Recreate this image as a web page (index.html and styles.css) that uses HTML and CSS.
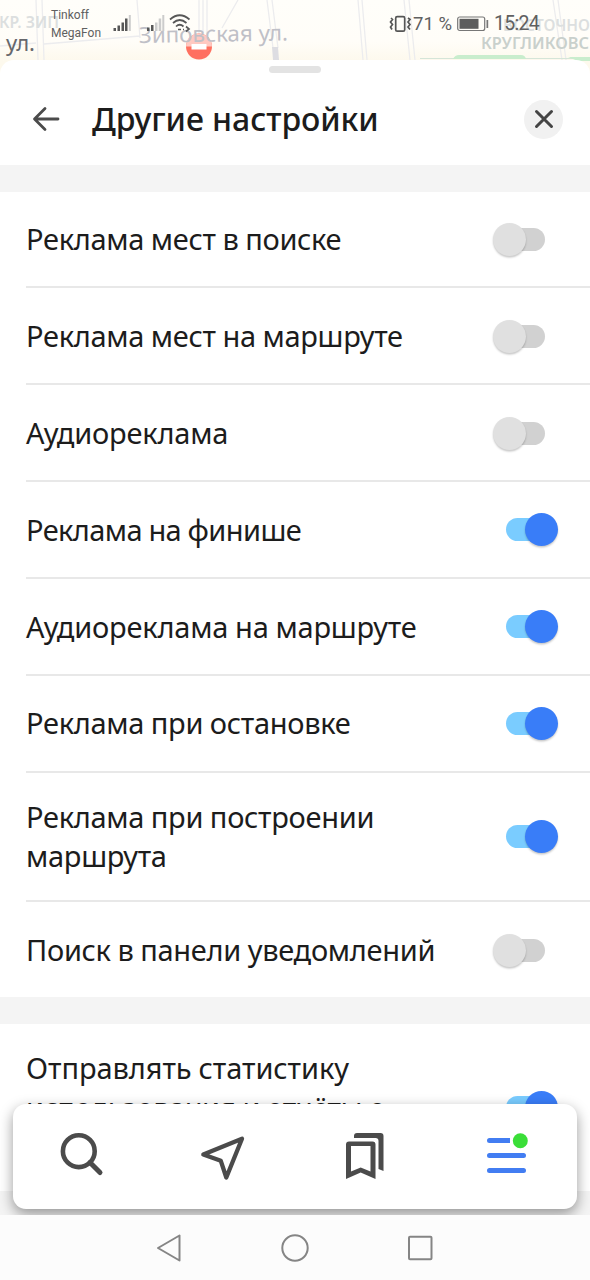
FILE: index.html
```html
<!DOCTYPE html>
<html lang="ru">
<head>
<meta charset="utf-8">
<title>Другие настройки</title>
<link rel="stylesheet" href="styles.css">
</head>
<body>
<div class="screen">
  <header class="top">
    <svg class="map" width="590" height="76" viewBox="0 0 590 76">
      <defs><linearGradient id="veil" x1="0" y1="0" x2="0" y2="1"><stop offset="0" stop-color="#fffefa"/><stop offset=".55" stop-color="#fffdf8"/><stop offset=".8" stop-color="#fdf9ed"/></linearGradient></defs>
      <rect width="590" height="76" fill="url(#veil)"/>
      <g fill="none" stroke="#ececee" stroke-width="1.3">
        <path d="M36 0L38 60M42 0L44 60M137 0L140 38M199 0V35M203 0V35M207 0V35M238 0L222 28M44 44L140 36M267 0L273 48M272 0L278 48M358 0L363 60M362 0L367 60M404 0L410 60M409 0L415 60M553 0L562 60M558 0L566 60M0 46L36 43"/>
      </g>
      <path d="M272 47h6l1 13h-6z" fill="#dddde2"/>
      <path d="M420 58.500H590" stroke="#d5e5d8" fill="none"/>
      <path d="M453 59q2-4 6-4h62q4 0 5 4zM568 57h22v4h-12z" fill="#c9edcd"/>
      <circle cx="199" cy="46.500" r="13" fill="#ff705f"/>
      <path d="M186 46.500a13 13 0 0 1 26 0z" fill="#ffc9c1"/>
      <rect x="191.500" y="44" width="15" height="5.500" fill="#fff"/>
      <g class="map-text">
        <text x="-1" y="28" class="district" textLength="60" lengthAdjust="spacingAndGlyphs">КР. ЗИП</text>
        <text x="6" y="51" class="street near" textLength="29" lengthAdjust="spacingAndGlyphs">ул.</text>
        <text x="139" y="43" class="street" textLength="149" lengthAdjust="spacingAndGlyphs" transform="rotate(-1 139 43)">Зиповская ул.</text>
        <text x="503" y="31" class="district" textLength="87" lengthAdjust="spacingAndGlyphs">ВОСТОЧНО</text>
        <text x="481" y="49" class="district dark" textLength="108" lengthAdjust="spacingAndGlyphs">КРУГЛИКОВС</text>
      </g>
    </svg>
    <div class="status">
      <div class="carriers"><span>Tinkoff</span><span>MegaFon</span></div>
      <svg class="signals" width="80" height="24" viewBox="0 0 80 24">
        <g fill="#575757"><rect x="1.500" y="16" width="2.500" height="3"/><rect x="5.500" y="13.500" width="2.500" height="5.500"/><rect x="9.500" y="10.500" width="2.500" height="8.500"/><rect x="13" y="6.500" width="2.500" height="12.500"/><rect x="35" y="15.500" width="2.500" height="3.500"/><rect x="39" y="13" width="2.500" height="6"/></g>
        <g fill="#ccc"><rect x="16.800" y="3" width="2" height="16"/><rect x="43" y="10.500" width="2.500" height="8.500"/><rect x="46.700" y="6.500" width="2.500" height="12.500"/><rect x="50.300" y="3" width="2" height="16"/></g>
        <g fill="none" stroke="#575757" stroke-width="1.700"><path d="M58 7.500Q67.700-1 77.500 7.500M61 11Q67.700 5 74.500 11M64 14.500Q67.700 11 71.500 14.500"/><path d="M66 17.500h3M74 14.500l3 2.500-3 2.500M71 17.500h1"/></g>
      </svg>
      <div class="right">
        <svg width="23" height="18" viewBox="0 0 23 18" fill="none" stroke="#555"><rect x="6.700" y="1.700" width="9" height="14.500" rx="1.500" stroke-width="1.700"/><path d="M2 3l1.500 1.500L1.500 7l2 2.500L1.500 12 3 14.500M19 3l2 1.500L19 7l2 2.500L19 12l2 2.500" stroke-width="1.700"/></svg>
        <span class="percent">71 %</span>
        <svg class="battery" width="32" height="16" viewBox="0 0 32 16"><rect x=".7" y="1" width="27" height="13.500" rx="2" fill="none" stroke="#777" stroke-width="1.200"/><rect x="2.500" y="2.800" width="19" height="10" fill="#5d5d5d"/><rect x="29.500" y="4" width="1.700" height="8" fill="#777"/></svg>
        <span class="time">15:24</span>
      </div>
    </div>
  </header>
  <main class="sheet">
    <div class="grip"></div>
    <div class="title-row">
      <svg class="back" width="28" height="28" viewBox="0 0 28 28"><path d="M26 14H3M13 3.500L2.500 14 13 24.500" fill="none" stroke="#4b4b4b" stroke-width="2.800" stroke-linecap="round" stroke-linejoin="round"/></svg>
      <h1><span>Другие настройки</span></h1>
      <button class="close" aria-label="Закрыть"><svg width="20" height="20" viewBox="0 0 20 20"><path d="M2.500 2.500l15 15M17.500 2.500l-15 15" stroke="#444" stroke-width="3" stroke-linecap="round"/></svg></button>
    </div>
    <div class="band"></div>
    <ul class="list">
      <li class="row"><span>Реклама мест в поиске</span><i class="toggle"></i></li>
      <li class="row"><span>Реклама мест на маршруте</span><i class="toggle"></i></li>
      <li class="row wide"><span>Аудиореклама</span><i class="toggle"></i></li>
      <li class="row tight"><span>Реклама на финише</span><i class="toggle on"></i></li>
      <li class="row wide"><span>Аудиореклама на маршруте</span><i class="toggle on"></i></li>
      <li class="row"><span>Реклама при остановке</span><i class="toggle on"></i></li>
      <li class="row tall"><span>Реклама при построении<br>маршрута</span><i class="toggle on"></i></li>
      <li class="row last"><span>Поиск в панели уведомлений</span><i class="toggle"></i></li>
    </ul>
    <div class="band"></div>
    <div class="row stats"><span>Отправлять статистику<br><span class="condensed">использования и отчёты о</span><br>сбоях</span><i class="toggle on"></i></div>
    <div class="band"></div>
  </main>
  <nav class="tabs">
    <svg width="141" height="105" viewBox="13 1104 141 105"><g fill="none" stroke="#4b4b4b"><circle cx="78.800" cy="1151.200" r="15.900" stroke-width="4.600"/><path d="M90 1162.500l10 10" stroke-width="5" stroke-linecap="round"/></g></svg>
    <svg width="141" height="105" viewBox="154 1104 141 105"><path d="M203.300 1154.500L242 1138.800 226.300 1177.500 220.800 1160.800z" fill="none" stroke="#4b4b4b" stroke-width="4.300" stroke-linejoin="round"/></svg>
    <svg width="141" height="105" viewBox="295 1104 141 105"><path d="M346 1179V1144.500q0-3 3-3h23.500q3 0 3 3V1179l-14.800-6.500zM351 1171.600l9.700-4.200 9.800 4.200V1146H351z" fill="#4b4b4b" fill-rule="evenodd"/><path d="M354 1138v-2q0-3 3-3h23.500q3 0 3 3v35l-5-2V1141q0-3-3-3z" fill="#4b4b4b"/></svg>
    <svg width="141" height="105" viewBox="436 1104 141 105"><path d="M489.500 1155.500h34M489.500 1170.500h34" stroke="#427df2" stroke-width="5" stroke-linecap="round"/><path d="M510 1138h-20.500a2.500 2.500 0 0 0 0 5H510z" fill="#427df2"/><circle cx="520.300" cy="1140.800" r="7.500" fill="#3ade38"/></svg>
  </nav>
  <footer class="system">
    <svg width="280" height="30" viewBox="0 0 280 30" fill="none" stroke="#858585" stroke-width="2" stroke-linejoin="round"><path d="M24.500 2.500v25L3 15z"/><circle cx="140" cy="15" r="12.700"/><rect x="254" y="3.700" width="22.500" height="22.500" rx="1"/></svg>
  </footer>
</div>
</body>
</html>
```
FILE: styles.css
```css
* { box-sizing: border-box; }
body { margin: 0; font-family: "Noto Sans", "Open Sans", sans-serif; color: #1c1c1c; background: #fff; }
.screen { position: relative; width: 590px; height: 1280px; overflow: hidden; }
.top { position: relative; height: 60px; }
.map { position: absolute; left: 0; top: 0; display: block; }
.map-text { font-family: "Noto Sans", sans-serif; }
.district { font-size: 16.5px; font-weight: 600; fill: #dcdfdf; }
.district.dark { fill: #c9d0cc; font-size: 16px; }
.street { font-size: 22px; fill: #bfc0c7; }
.street.near { fill: #66676c; }
.status { position: relative; display: flex; height: 60px; padding: 6px 50px 0 51px; font-family: Roboto, sans-serif; color: #606060; }
.carriers { display: flex; flex-direction: column; width: 61px; padding-top: 1px; font-size: 12px; line-height: 17.5px; }
.signals { margin-top: 6px; }
.right { display: flex; align-items: center; height: 35px; margin-left: auto; font-size: 19.5px; white-space: nowrap; }
.percent { margin-left: 1px; width: 44px; font-size: 18.5px; }
.time { width: 46px; margin-left: 5px; letter-spacing: -.7px; }
.sheet { position: relative; height: 1156px; background: #fff; border-radius: 14px 14px 0 0; overflow: hidden; }
.grip { width: 52px; height: 7px; margin: 6px auto 0; border-radius: 4px; background: #e3e3e3; }
.title-row { display: flex; align-items: center; height: 92px; padding: 0 27px 0 32px; }
h1 { flex: 1; margin: 0 0 0 32px; font-size: 32px; line-height: 44px; font-weight: 500; letter-spacing: -.05px; white-space: nowrap; }
.close { display: grid; place-items: center; width: 39px; height: 39px; padding: 0; border: 0; border-radius: 50%; background: #f1f1f1; }
.band { height: 26.5px; background: #f4f4f4; }
.list { margin: 0; padding: 0; list-style: none; }
.row { display: flex; align-items: center; justify-content: space-between; height: 96.85px; margin-left: 26px; padding-right: 32px; border-bottom: 2px solid #e8e8e8; font-size: 29px; line-height: 39.5px; letter-spacing: -.3px; word-spacing: -.5px; white-space: nowrap; }
.row.wide { letter-spacing: -.2px; }
.row.tight { letter-spacing: -.6px; }
.row.tall { height: 129.5px; }
.row.last { border: 0; height: 95.2px; }
.row.stats { border: 0; height: 167px; letter-spacing: -.07px; }
.condensed { letter-spacing: -.5px; }
.toggle { position: relative; width: 53px; height: 33px; margin: 1px 13px 0 0; }
.toggle::before { content: ""; position: absolute; left: 5px; right: 0; top: 5px; height: 23px; border-radius: 12px; background: #d1d1d1; }
.toggle::after { content: ""; position: absolute; left: .5px; top: 0; width: 33px; height: 33px; border-radius: 50%; background: #e0e0e0; box-shadow: 0 1.500px 2px rgba(0,0,0,.22); }
.toggle.on { margin-right: 0; }
.toggle.on::before { left: 1px; right: 5px; background: #7accff; }
.toggle.on::after { left: 20px; background: #397df8; }
.tabs { position: absolute; left: 13px; top: 1104px; display: flex; width: 564px; height: 105px; border-radius: 13px; background: #fff; box-shadow: 0 5px 14px rgba(0,0,0,.4); z-index: 1; }
.system { position: relative; z-index: 2; display: grid; place-items: center; height: 65px; margin-top: -1px; background: #fcfcfc; }
```
